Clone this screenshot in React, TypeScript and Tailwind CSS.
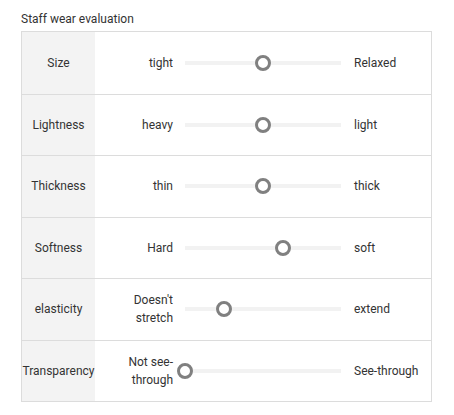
import React from "react";

const rows = [
  { label: "Size", left: "tight", right: "Relaxed", v: 0.5 },
  { label: "Lightness", left: "heavy", right: "light", v: 0.5 },
  { label: "Thickness", left: "thin", right: "thick", v: 0.5 },
  { label: "Softness", left: "Hard", right: "soft", v: 0.625 },
  { label: "elasticity", left: "Doesn't stretch", right: "extend", v: 0.25 },
  { label: "Transparency", left: "Not see-through", right: "See-through", v: 0 },
];

export default function App() {
  return (
    <div
      className="bg-white w-[454px] h-[415px] pl-[21px] pt-[10px] text-[#333] text-[12px]"
      style={{ fontFamily: 'Roboto, sans-serif' }}
    >
      <div className="h-[21px] leading-[18px]">Staff wear evaluation</div>
      <div className="w-[411px] border border-[#dcdcdc]">
        {rows.map((r, i) => (
          <div
            key={r.label}
            className={`flex h-[61.5px] items-stretch ${i > 0 ? "border-t border-[#dcdcdc]" : ""}`}
          >
            <div className="w-[73px] bg-[#f3f3f3] flex items-center justify-center">
              {r.label}
            </div>
            <div className="flex items-center">
              <div className="w-[78px] text-right leading-[18px]">{r.left}</div>
              <div className="relative ml-[12px] w-[156px] h-[4px] bg-[#f2f2f2]">
                <div
                  className="absolute top-1/2 w-[16px] h-[16px] rounded-full border-[3px] border-[#808080] bg-white -translate-x-1/2 -translate-y-1/2"
                  style={{ left: `${r.v * 100}%` }}
                />
              </div>
              <div className="ml-[13px]">{r.right}</div>
            </div>
          </div>
        ))}
      </div>
    </div>
  );
}
